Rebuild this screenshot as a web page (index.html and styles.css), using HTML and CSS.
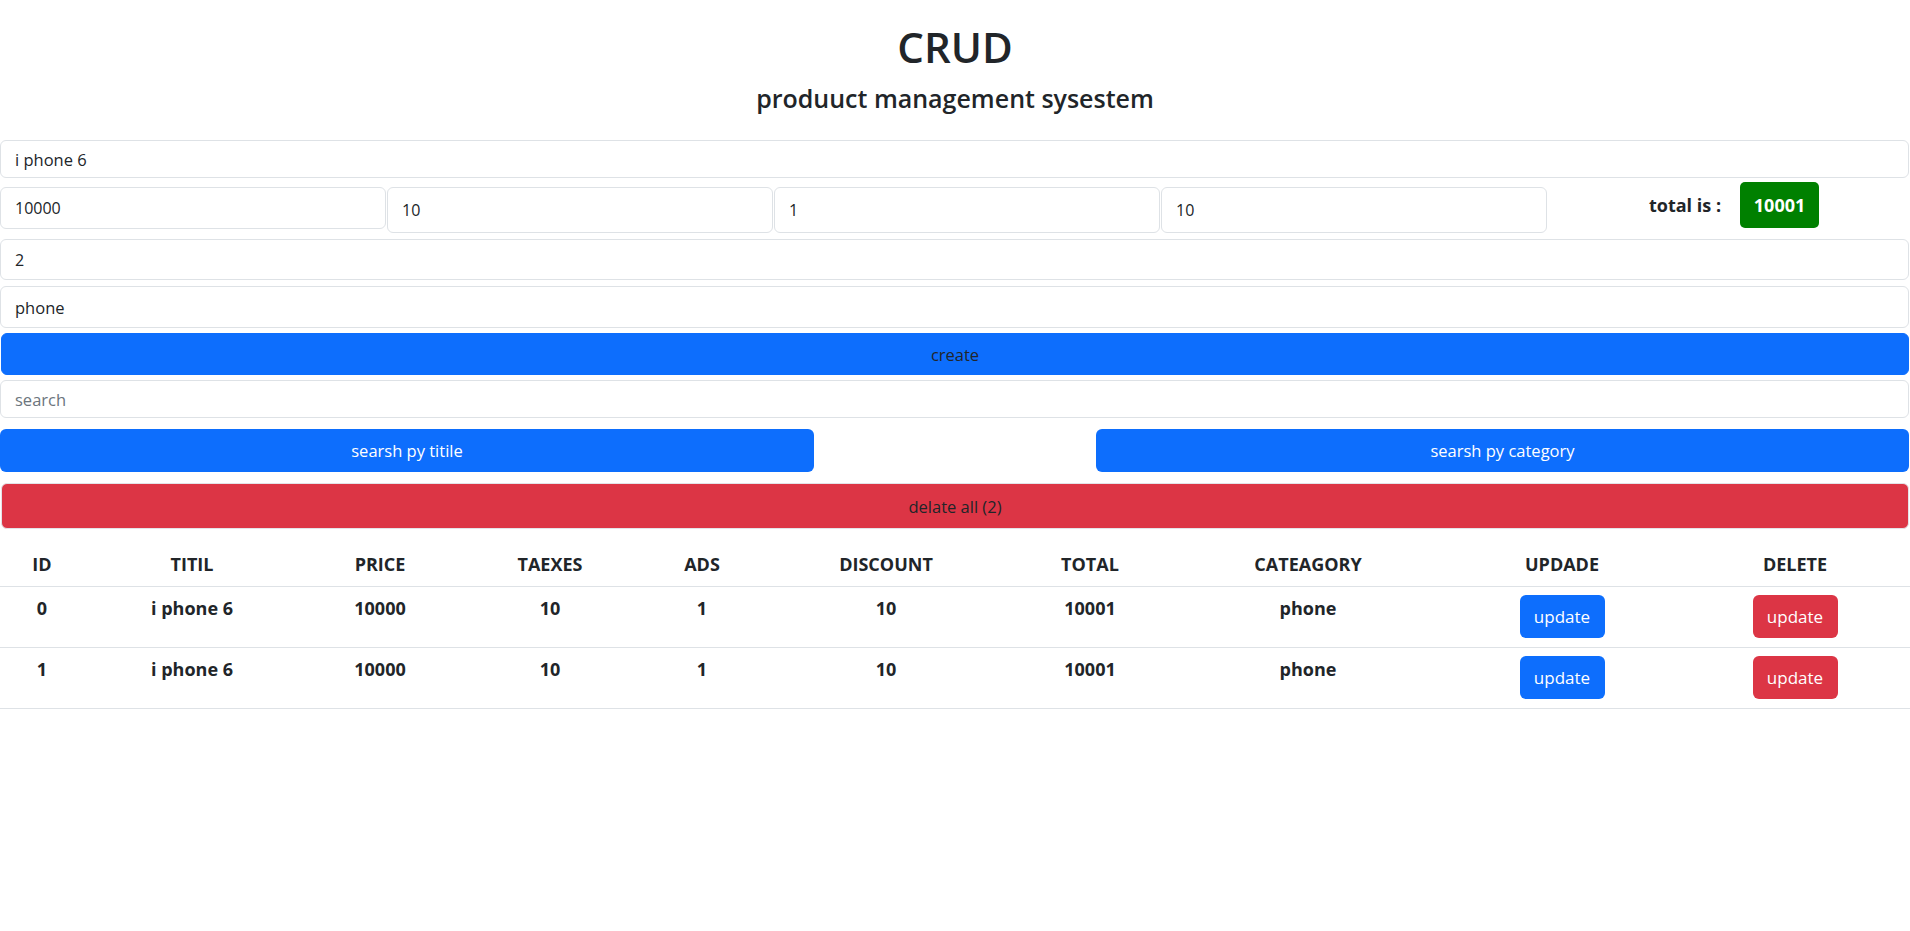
FILE: index.html
```html
<!DOCTYPE html>
<html lang="en">
<head>
<meta charset="utf-8">
<title>CRUD</title>
<link rel="stylesheet" href="styles.css">
</head>
<body>
<div class="crud">
  <header class="head">
    <h1 class="head-title">CRUD</h1>
    <h2 class="head-sub">produuct management sysestem</h2>
  </header>

  <div class="inputs">
    <input class="field field-title" type="text" value="i phone 6">
    <div class="price-row">
      <input class="field field-price field-first" type="text" value="10000">
      <input class="field field-price" type="text" value="10">
      <input class="field field-price" type="text" value="1">
      <input class="field field-price" type="text" value="10">
      <div class="total">
        <span class="total-label">total is :</span>
        <span class="total-badge">10001</span>
      </div>
    </div>
    <input class="field field-count" type="text" value="2">
    <input class="field field-category" type="text" value="phone">
    <button class="btn-wide btn-create">create</button>
  </div>

  <div class="search">
    <input class="field field-search" type="text" placeholder="search">
    <div class="search-btns">
      <button class="btn-search">searsh py titile</button>
      <button class="btn-search">searsh py category</button>
    </div>
  </div>

  <div class="delete-all">
    <button class="btn-wide btn-delete-all">delate all (2)</button>
  </div>

  <table class="products">
    <colgroup>
      <col style="width:84px">
      <col style="width:216px">
      <col style="width:160px">
      <col style="width:180px">
      <col style="width:124px">
      <col style="width:244px">
      <col style="width:164px">
      <col style="width:272px">
      <col style="width:236px">
      <col>
    </colgroup>
    <thead>
      <tr>
        <th>ID</th>
        <th>TITIL</th>
        <th>PRICE</th>
        <th>TAEXES</th>
        <th>ADS</th>
        <th>DISCOUNT</th>
        <th>TOTAL</th>
        <th>CATEAGORY</th>
        <th>UPDADE</th>
        <th>DELETE</th>
      </tr>
    </thead>
    <tbody>
      <tr>
        <td>0</td>
        <td>i phone 6</td>
        <td>10000</td>
        <td>10</td>
        <td>1</td>
        <td>10</td>
        <td>10001</td>
        <td>phone</td>
        <td><button class="btn-row btn-update">update</button></td>
        <td><button class="btn-row btn-remove">update</button></td>
      </tr>
      <tr>
        <td>1</td>
        <td>i phone 6</td>
        <td>10000</td>
        <td>10</td>
        <td>1</td>
        <td>10</td>
        <td>10001</td>
        <td>phone</td>
        <td><button class="btn-row btn-update">update</button></td>
        <td><button class="btn-row btn-remove">update</button></td>
      </tr>
    </tbody>
  </table>
</div>
</body>
</html>
```

FILE: styles.css
```css
* {
  box-sizing: border-box;
}

html, body {
  margin: 0;
  padding: 0;
  background: #ffffff;
}

body {
  font-family: "Open Sans", "Noto Sans", sans-serif;
  font-size: 16px;
  line-height: 1.5;
  color: #212529;
}

.crud {
  width: 1910px;
}

.head {
  text-align: center;
  padding-top: 22px;
}

.head-title {
  margin: 0;
  font-size: 42px;
  font-weight: 600;
  line-height: 1.2;
}

.head-sub {
  margin: 11px 0 0 0;
  font-size: 25px;
  font-weight: 600;
  line-height: 1.2;
}

.inputs {
  display: flex;
  flex-direction: column;
  padding-top: 27px;
}

.field {
  display: block;
  width: 100%;
  margin: 0;
  padding: 0 14px;
  border: 1px solid #dee2e6;
  border-radius: 6px;
  background: #fff;
  font-family: "Open Sans", "Noto Sans", sans-serif;
  font-size: 16px;
  color: #212529;
  outline: none;
}

.field::placeholder {
  color: #6c757d;
}

.field-title {
  width: 1909px;
  height: 38px;
  font-size: 16.5px;
}

.price-row {
  display: flex;
  align-items: flex-start;
  gap: 1px;
  margin-top: 4px;
  height: 51px;
}

.field-price {
  flex: 0 0 386px;
  width: 386px;
  height: 46px;
  margin-top: 5px;
}

.field-first {
  height: 42px;
}

.total {
  flex: 1;
  display: flex;
  justify-content: center;
  align-items: center;
  gap: 19px;
  height: 46px;
  padding-left: 10px;
}

.total-label {
  font-size: 18px;
  font-weight: 700;
}

.total-badge {
  display: inline-flex;
  align-items: center;
  justify-content: center;
  width: 79px;
  height: 46px;
  background: #008000;
  color: #fff;
  border-radius: 5px;
  font-size: 18px;
  font-weight: 700;
}

.field-count {
  width: 1909px;
  height: 41px;
  margin-top: 6px;
}

.field-category {
  width: 1909px;
  height: 42px;
  margin-top: 6px;
  font-size: 16.5px;
}

.btn-wide {
  display: block;
  width: 1908px;
  margin-left: 1px;
  border: 1px solid #e3e3e8;
  border-radius: 6px;
  font-family: "Open Sans", "Noto Sans", sans-serif;
  font-size: 16.5px;
  color: #212529;
  cursor: pointer;
}

.btn-create {
  height: 42px;
  margin-top: 5px;
  background: #0d6efd;
  border-color: #0d6efd;
}

.search {
  padding-top: 5px;
}

.field-search {
  width: 1909px;
  height: 38px;
  font-size: 16.5px;
}

.search-btns {
  display: flex;
  justify-content: space-between;
  margin-top: 11px;
  width: 1909px;
}

.btn-search {
  width: 814px;
  height: 43px;
  border: none;
  border-radius: 6px;
  background: #0d6efd;
  color: #fff;
  font-family: "Open Sans", "Noto Sans", sans-serif;
  font-size: 16.5px;
}

.search-btns .btn-search:last-child {
  width: 813px;
}

.delete-all {
  padding-top: 11px;
}

.btn-delete-all {
  height: 46px;
  background: #dc3545;
}

.products {
  width: 100%;
  margin-top: 14px;
  border-collapse: collapse;
  table-layout: fixed;
  font-size: 18px;
  font-weight: 700;
  line-height: 27px;
}

.products th,
.products td {
  padding: 8px;
  text-align: center;
  vertical-align: top;
  border-bottom: 1px solid #dee2e6;
  font-weight: 700;
}

.products td {
  padding-bottom: 9px;
}

.btn-row {
  display: inline-block;
  width: 85px;
  height: 43px;
  border: none;
  border-radius: 6px;
  color: #fff;
  font-family: "Open Sans", "Noto Sans", sans-serif;
  font-size: 17px;
  font-weight: 400;
  vertical-align: top;
}

.btn-update {
  background: #0d6efd;
}

.btn-remove {
  background: #dc3545;
}
```
